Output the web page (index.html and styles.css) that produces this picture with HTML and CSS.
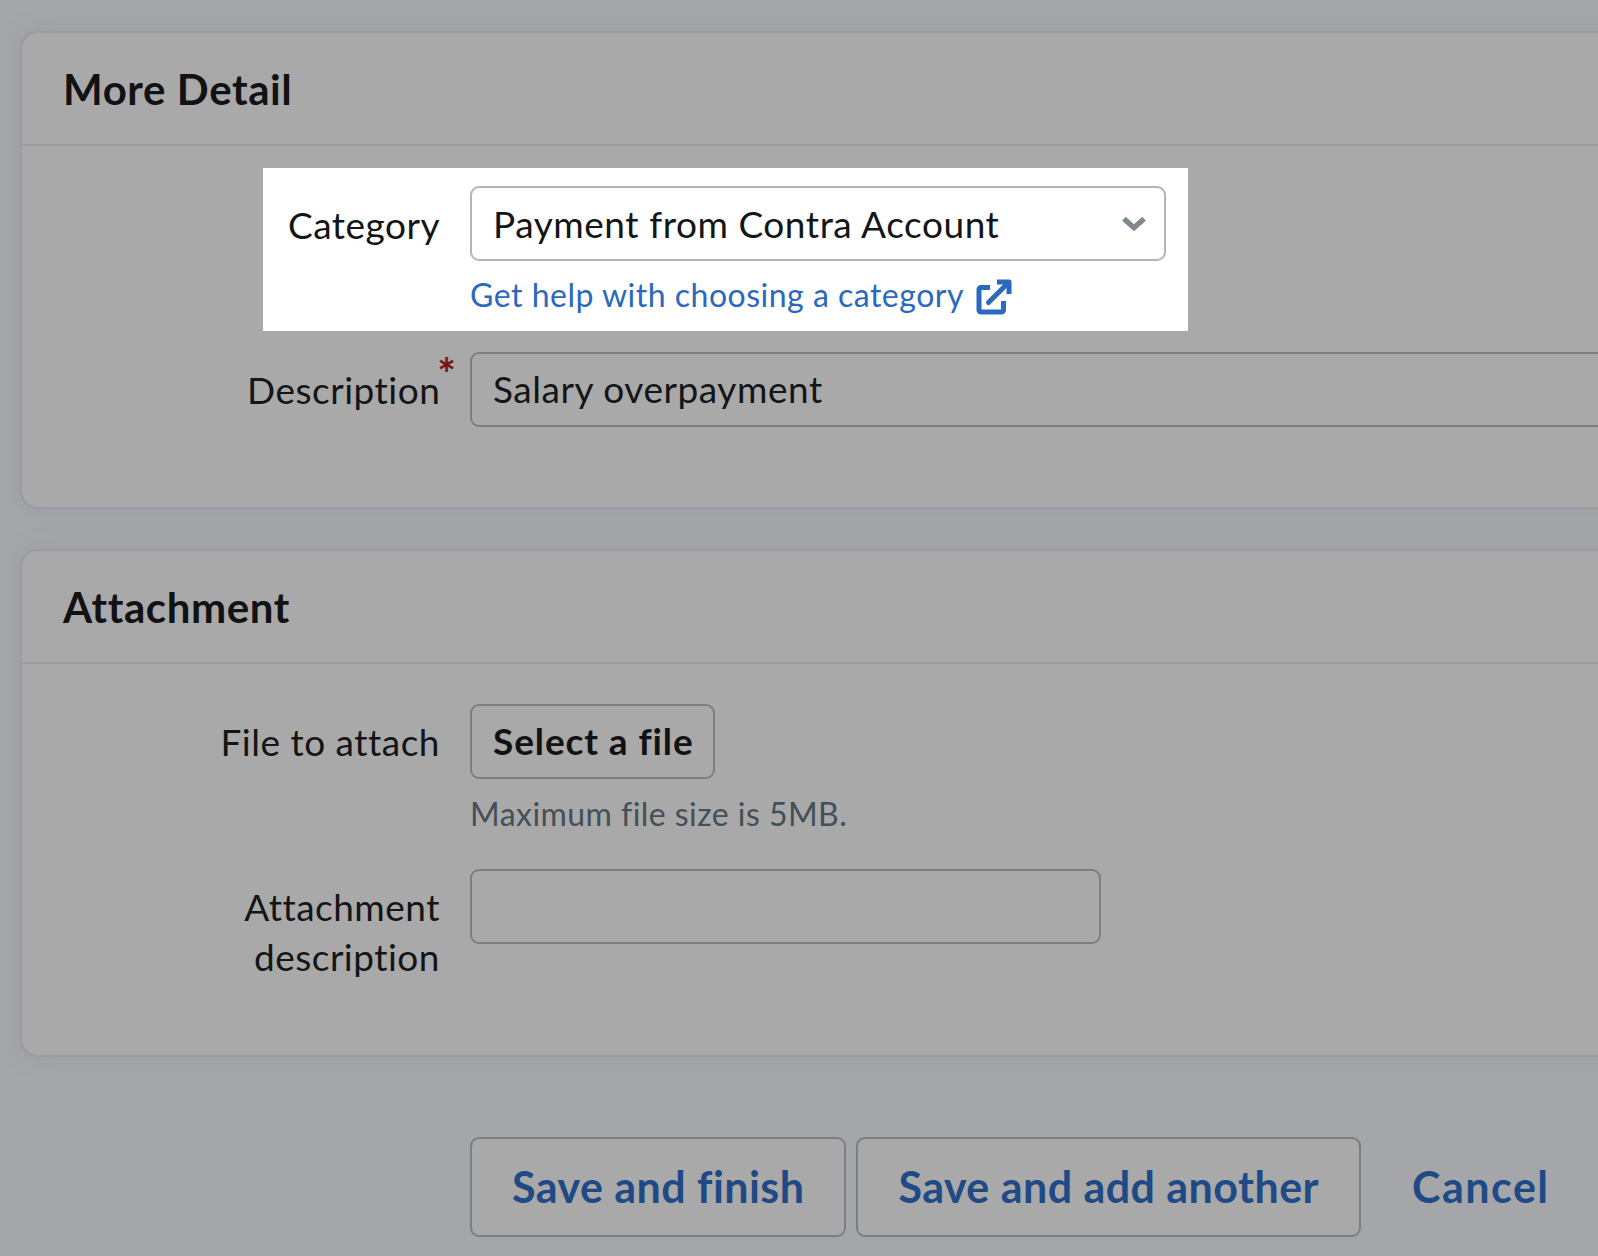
FILE: index.html
```html
<!DOCTYPE html>
<html lang="en">
<head>
<meta charset="utf-8">
<title>More Detail</title>
<link rel="stylesheet" href="styles.css">
</head>
<body>
<main class="page">
  <section class="card">
    <h2 class="card-title">More Detail</h2>
    <div class="card-body">
      <div class="highlight">
        <div class="row row-highlight">
          <label class="label label-select">Category</label>
          <div class="control">
            <div class="field field-select">
              <span>Payment from Contra Account</span>
              <svg class="chevron" viewBox="0 0 24 16" width="26" height="17"><path d="M2.5 3.5L12 12l9.500-8.500" fill="none" stroke="currentColor" stroke-width="5"/></svg>
            </div>
            <a class="help-link" href="#">Get help with choosing a category
              <svg class="ext" viewBox="0 0 36 36" width="36" height="36"><path d="M14 8.500H5a2 2 0 0 0-2 2V31a2 2 0 0 0 2 2h20.500a2 2 0 0 0 2-2V22" fill="none" stroke="currentColor" stroke-width="5"/><path d="M12.500 23.500L32 4" fill="none" stroke="currentColor" stroke-width="5" stroke-linecap="round"/><path d="M21 3h12v12" fill="none" stroke="currentColor" stroke-width="5" stroke-linejoin="round"/></svg>
            </a>
          </div>
        </div>
      </div>
      <div class="row row-desc">
        <label class="label">Description<span class="req">*</span></label>
        <div class="field field-wide">Salary overpayment</div>
      </div>
    </div>
  </section>
  <section class="card card-second">
    <h2 class="card-title">Attachment</h2>
    <div class="card-body card-body-second">
      <div class="row">
        <label class="label">File to attach</label>
        <div class="control">
          <div class="field field-file">Select a file</div>
          <p class="hint">Maximum file size is 5MB.</p>
        </div>
      </div>
      <div class="row row-attach">
        <label class="label label-wrap">Attachment description</label>
        <div class="field field-attach"></div>
      </div>
    </div>
  </section>
  <div class="actions">
    <a class="btn" href="#">Save and finish</a>
    <a class="btn" href="#">Save and add another</a>
    <a class="cancel" href="#">Cancel</a>
  </div>
</main>
</body>
</html>
```
FILE: styles.css
```css
html, body { margin: 0; height: 100%; overflow: hidden; }
body {
  background: #a4a6aa;
  font-family: "Lato", "Liberation Sans", sans-serif;
  font-variant-ligatures: none;
  color: #141516;
}
.page { width: 1800px; height: 1256px; padding: 31px 0 0 20px; box-sizing: border-box; }
.card {
  background: #a9a9a9;
  border: 2px solid #9a9ba0;
  border-radius: 18px;
  height: 478px;
  box-sizing: border-box;
  box-shadow: 0 0 26px rgba(110, 112, 125, 0.16);
}
.card-second { margin-top: 40px; height: 508px; }
.card-title {
  margin: 0;
  height: 113px;
  box-sizing: border-box;
  padding: 29px 0 0 41px;
  border-bottom: 2px solid #9a9ba0;
  font-size: 42px;
  line-height: 54px;
  letter-spacing: 0.6px;
  font-weight: 700;
  color: #111214;
}
.card-body { padding-top: 22px; }
.card-body-second { padding-top: 40px; }
.highlight {
  margin-left: 241px;
  width: 925px;
  height: 163px;
  background: #fff;
  box-sizing: border-box;
  padding: 18px 0 0 0;
}
.row { display: grid; grid-template-columns: 418px 1fr; column-gap: 30px; align-items: start; }
.row-highlight { grid-template-columns: 177px 696px; }
.row-desc { margin-top: 21px; }
.row-attach { margin-top: 35px; }
.label {
  text-align: right;
  font-size: 37px;
  line-height: 50px;
  letter-spacing: 0.5px;
  padding-top: 13px;
  color: #141516;
}
.label-select { padding-top: 14px; }
.label-wrap { justify-self: end; width: 240px; }
.req { color: #7c1414; font-size: 44px; font-weight: 700; vertical-align: 14px; line-height: 0; margin-left: -3px; margin-right: -16px; letter-spacing: 0; }
.field {
  height: 75px;
  box-sizing: border-box;
  border: 2px solid #7b7f83;
  border-radius: 9px;
  font-size: 37px;
  line-height: 70px;
  letter-spacing: 0.55px;
  padding-left: 21px;
  color: #141516;
}
.field-select {
  border-color: #b1b6ba;
  background: #fff;
  width: 696px;
  display: flex;
  justify-content: space-between;
  align-items: center;
  padding-right: 17px;
}
.chevron { color: #7d8891; }
.field-wide { width: 1400px; }
.field-file { width: 245px; font-weight: 700; color: #111214; letter-spacing: 0.9px; }
.field-attach { width: 631px; }
.help-link {
  display: flex;
  align-items: center;
  gap: 12px;
  margin-top: 14px;
  font-size: 32px;
  line-height: 40px;
  letter-spacing: 0.5px;
  color: #2a69bd;
  text-decoration: none;
}
.ext { color: #2a69bd; margin-top: 3px; }
.hint { margin: 15px 0 0; font-size: 32px; line-height: 40px; letter-spacing: 0.45px; color: #454f57; }
.actions { display: flex; align-items: flex-start; margin: 80px 0 0 450px; }
.btn {
  height: 100px;
  box-sizing: border-box;
  border: 2px solid #7b7f83;
  border-radius: 9px;
  background: #a9a9a9;
  padding: 0 40px;
  margin-right: 10px;
  font-size: 43px;
  line-height: 96px;
  letter-spacing: 0.45px;
  font-weight: 700;
  color: #1f4a85;
  text-decoration: none;
}
.cancel { margin-left: 41px; font-size: 43px; line-height: 100px; letter-spacing: 1.5px; font-weight: 700; color: #1f4a85; text-decoration: none; }
```
